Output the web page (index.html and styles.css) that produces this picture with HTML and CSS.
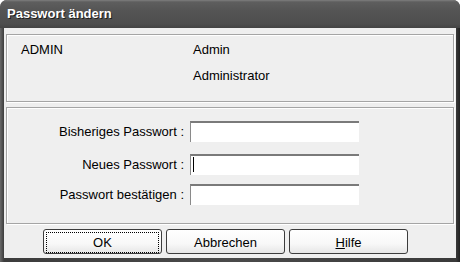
FILE: index.html
```html
<!DOCTYPE html>
<html lang="de">
<head>
    <meta charset="UTF-8">
    <title>Passwort ändern</title>
    <link rel="stylesheet" href="styles.css">
</head>
<body>
    <div class="window">
        <div class="titlebar">Passwort ändern</div>
        <div class="client">
            <div class="panel user-panel">
                <div class="user-row">
                    <span class="user-id">ADMIN</span>
                    <span>Admin</span>
                </div>
                <div class="user-row">
                    <span class="user-id"></span>
                    <span>Administrator</span>
                </div>
            </div>

            <div class="panel form-panel">
                <div class="form-row">
                    <label>Bisheriges Passwort :</label>
                    <input type="password">
                </div>
                <div class="form-row row-new">
                    <label>Neues Passwort :</label>
                    <div class="focus-field"><input type="password"></div>
                </div>
                <div class="form-row row-confirm">
                    <label>Passwort bestätigen :</label>
                    <input type="password">
                </div>
            </div>

            <div class="buttons">
                <button class="default"><span class="focus-ring">OK</span></button>
                <button><span class="focus-ring">Abbrechen</span></button>
                <button><span class="focus-ring"><u>H</u>ilfe</span></button>
            </div>
        </div>
    </div>
</body>
</html>
```

FILE: styles.css
```css
body {
    margin: 0;
    width: 460px;
    height: 262px;
    background: #ffffff;
    font-family: "Liberation Sans", Arial, sans-serif;
    font-size: 13px;
    color: #000;
}
.window {
    height: 262px;
    box-sizing: border-box;
    padding: 0 4px 4px 4px;
    background: linear-gradient(to right, #6a6a6a 0, #3c3c3c 4px, #4a4a4a 50%, #3a3a3a calc(100% - 4px), #222 100%);
    border-radius: 7px 7px 0 0;
}
.titlebar {
    height: 28px;
    margin: 0 -4px;
    padding-left: 7px;
    box-sizing: border-box;
    line-height: 28px;
    border-radius: 7px 7px 0 0;
    background: linear-gradient(to bottom, #7e7e7e 0, #5e5e5e 2px, #545454 40%, #4e4e4e 85%, #444 100%);
    color: #fff;
    font-weight: bold;
    font-size: 13px;
    text-shadow: 1px 1px 0 #1e1e1e;
}
.client {
    height: 230px;
    background: #efefef;
    padding: 6px 2px 0 2px;
    box-sizing: border-box;
}
.panel {
    border: 1px solid #a5a5a5;
    box-shadow: inset 1px 1px 0 #fff, 1px 1px 0 #fff;
}
.user-panel {
    height: 68px;
    box-sizing: border-box;
    padding-top: 2px;
}
.user-row {
    display: flex;
    height: 26px;
    line-height: 26px;
}
.user-id {
    width: 172px;
    padding-left: 14px;
}
.form-panel {
    margin-top: 5px;
    height: 117px;
    box-sizing: border-box;
    padding-top: 13px;
}
.form-row {
    display: grid;
    grid-template-columns: 177px 169px;
    column-gap: 6px;
    height: 21px;
    align-items: center;
}
.row-new {
    margin-top: 12px;
}
.row-confirm {
    margin-top: 9px;
}
.form-row label {
    text-align: right;
}
.form-row input,
.focus-field {
    box-sizing: border-box;
    width: 169px;
    height: 21px;
}
.form-row input {
    margin: 0;
    padding: 0 3px;
    border: 0;
    border-top: 2px solid #7a7a7a;
    border-left: 1px solid #8a8a8a;
    background: #fff;
    outline: none;
}
.focus-field {
    position: relative;
}
.focus-field::after {
    content: "";
    position: absolute;
    left: 3px;
    top: 3px;
    width: 1px;
    height: 15px;
    background: #000;
}
.buttons {
    display: flex;
    gap: 4px;
    margin-top: 5px;
    padding-left: 37px;
}
button {
    width: 119px;
    height: 25px;
    padding: 2px;
    border: 1px solid #3c3c3c;
    border-radius: 3px;
    background: linear-gradient(to bottom, #ffffff 0, #f8f8f8 60%, #e6e6e6 100%);
    font-family: "Liberation Sans", Arial, sans-serif;
    font-size: 13px;
    color: #000;
}
.focus-ring {
    display: block;
    height: 19px;
    line-height: 19px;
    border: 1px dotted transparent;
}
.default .focus-ring {
    border-color: #000;
}
```
